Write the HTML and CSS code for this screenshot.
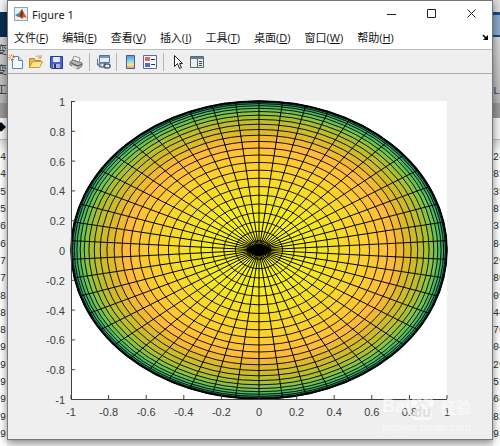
FILE: index.html
```html
<!DOCTYPE html>
<html lang="zh-CN">
<head>
    <meta charset="UTF-8">
    <meta name="viewport" content="width=device-width, initial-scale=1">
    <title>Figure 1</title>
    <link rel="stylesheet" href="styles.css">
</head>
<body>
    <div class="behind left">
        <div class="strip title"></div>
        <div class="strip ribbon"><span>变</span><span>变</span><span>工</span></div>
        <div class="strip path">◆</div>
        <div class="digits"><span>4</span><span>4</span><span>5</span><span>5</span><span>6</span><span>6</span><span>7</span><span>7</span><span>8</span><span>8</span><span>8</span><span>9</span><span>9</span><span>9</span><span>9</span><span>9</span><span>9</span></div>
    </div>

    <main class="window">
        <header class="titlebar">
            <svg class="logo" viewBox="0 0 14 14">
                <rect x=".5" y=".5" width="13" height="13" fill="#e9f0f5" stroke="#91a4b3"/>
                <path d="M1 8l4-2 3-4-1 7-3 1z" fill="#3e83b8"/>
                <path d="M4 10l2-3 2-5 2 4 3 5-3-1-2 2-2-2z" fill="#d4541f"/>
                <path d="M8 2l1 5-2 4-1-2z" fill="#802616"/>
            </svg>
            <h1>Figure 1</h1>
            <div class="controls">
                <button aria-label="最小化"><svg viewBox="0 0 10 10"><path d="M0 5.500h9"/></svg></button>
                <button aria-label="最大化"><svg viewBox="0 0 10 10"><path d="M.5 .5h8v8h-8z"/></svg></button>
                <button aria-label="关闭"><svg viewBox="0 0 10 10"><path d="M.5 .5l8 8M8.500 .5l-8 8"/></svg></button>
            </div>
        </header>

        <nav class="menubar">
            <button>文件(<u>F</u>)</button>
            <button>编辑(<u>E</u>)</button>
            <button>查看(<u>V</u>)</button>
            <button>插入(<u>I</u>)</button>
            <button>工具(<u>T</u>)</button>
            <button>桌面(<u>D</u>)</button>
            <button>窗口(<u>W</u>)</button>
            <button>帮助(<u>H</u>)</button>
            <svg class="dock" viewBox="0 0 6 6"><path d="M1 1l3 3" stroke="#000" stroke-width="1.500"/><path d="M6 1v5H1z"/></svg>
        </nav>

        <div class="toolbar">
            <button aria-label="新建图窗"><svg viewBox="0 0 16 16"><path d="M4.500 2.500h6l4 4v8h-10z" fill="#f5faff" stroke="#6583b5"/><path d="M10.500 2.500v4h4" fill="#cddcf2" stroke="#6583b5"/><path d="M1 1l5 5M6 1L1 6M3.500 0v7M0 3.500h7" stroke="#e5865b"/><circle cx="3.500" cy="3.500" r="1.300" fill="#fff1b5"/></svg></button>
            <button aria-label="打开文件"><svg viewBox="0 0 16 16"><path d="M1.500 13.500v-9h5l1 2h5v2" fill="#e7b947" stroke="#bf8b25"/><path d="M1.500 13.500l3-6h10l-3 6z" fill="#ffe493" stroke="#c99932"/><path d="M8 3c2-2 4-1 5 1M13 1v3h-3" fill="none" stroke="#bd9852"/></svg></button>
            <button aria-label="保存图窗"><svg viewBox="0 0 16 16"><path d="M2.500 2.500h12v12h-11l-1-1z" fill="#4a62cf" stroke="#293d91"/><path d="M5 3h7v5H5z" fill="#e4ecfb"/><path d="M5 10h7v4H5z" fill="#afb8d3"/><path d="M6 10h2v4H6z" fill="#233575"/></svg></button>
            <button aria-label="打印图窗"><svg viewBox="0 0 16 16"><path d="M4 7l2-5 6 2-1 5z" fill="#eef3fa" stroke="#8b95a4"/><path d="M2 8l3-2 9 3v3l-4 3-8-4z" fill="#b4b3ae" stroke="#77756f"/><path d="M3 9l7 3 4-2" fill="none" stroke="#4c4c48"/><path d="M4 12l5 2" stroke="#fff"/></svg></button>
            <i></i>
            <button aria-label="链接绘图"><svg viewBox="0 0 16 16"><path d="M4.500 1.500h10v7h-10z" fill="#e5edf8" stroke="#556e9f"/><path d="M5 2h9v2H5z" fill="#7893c6"/><path d="M2.500 5v6h4" fill="none" stroke="#556e9f"/><rect x="4" y="9" width="6" height="4" rx="2" fill="none" stroke="#657b9c" stroke-width="1.500"/><rect x="9" y="10" width="6" height="4" rx="2" fill="none" stroke="#485e82" stroke-width="1.500"/></svg></button>
            <i></i>
            <button aria-label="插入颜色栏"><svg viewBox="0 0 16 16"><defs><linearGradient id="bar" x2="0" y2="1"><stop stop-color="#6685e0"/><stop offset=".4" stop-color="#7bdbe3"/><stop offset=".7" stop-color="#f4e792"/><stop offset="1" stop-color="#ed9a75"/></linearGradient></defs><path d="M4.500 1.500h8v13h-8z" fill="url(#bar)" stroke="#455c91"/></svg></button>
            <button aria-label="插入图例"><svg viewBox="0 0 16 16"><path d="M1.500 1.500h13v13h-13z" fill="#f8faff" stroke="#576e9c"/><path d="M3 3h5v4H3z" fill="#ed6558"/><path d="M3 9h5v4H3z" fill="#5266dc"/><path d="M9 5.500h4M9 10.500h4" stroke="#333"/></svg></button>
            <i></i>
            <button aria-label="编辑绘图"><svg viewBox="0 0 16 16"><path d="M5.500 1.500v11l3-3 2 5 2-1-2-4h3z" fill="#fff" stroke="#222"/></svg></button>
            <button aria-label="属性检查器"><svg viewBox="0 0 16 16"><path d="M1.500 2.500h13v11h-13z" fill="#e8eef0" stroke="#59676f"/><path d="M2 3h12v2H2z" fill="#617f98"/><path d="M8.500 5v8" stroke="#59676f"/><path d="M10 7.500h3M10 9.500h3M10 11.500h3" stroke="#444"/></svg></button>
        </div>

        <section class="figure">
            <svg id="plot" viewBox="0 0 484 365" role="img" aria-label="球面俯视图"></svg>
            <div class="watermark">
                <div class="brand">Bai<span class="paw"><svg viewBox="0 0 24 28"><ellipse cx="4" cy="11" rx="3" ry="4"/><ellipse cx="9" cy="5" rx="3" ry="5"/><ellipse cx="16" cy="5" rx="3" ry="5"/><ellipse cx="21" cy="11" rx="3" ry="4"/><path d="M12 12c4 0 5 4 9 8 3 4 1 8-3 8H6c-4 0-6-4-3-8 4-4 5-8 9-8z"/></svg><b>du</b></span><em>经验</em></div>
                <div class="site">jingyan.baidu.com</div>
            </div>
        </section>
    </main>

    <div class="behind right">
        <div class="strip title"></div>
        <div class="strip ribbon"><span>LA</span></div>
        <div class="strip path"></div>
        <div class="digits"><span>24</span><span>81</span><span>35</span><span>87</span><span>37</span><span>84</span><span>29</span><span>80</span><span>09</span><span>44</span><span>70</span><span>04</span><span>29</span><span>51</span><span>68</span><span>82</span><span>93</span></div>
    </div>

    <script src="plot.js"></script>
</body>
</html>
```

FILE: styles.css
```css
* {
    box-sizing: border-box;
}
body {
    margin: 0;
    min-height: 100vh;
    display: flex;
    background: #f0f0f0;
    font-family: "Noto Sans", "Noto Sans CJK SC", sans-serif;
    overflow: hidden;
}
button {
    padding: 0;
    border: none;
    background: none;
    font: inherit;
    color: inherit;
}
svg {
    display: block;
}
.window {
    flex: 1;
    min-width: 0;
    align-self: flex-start;
    border: 1px solid #777;
    background: #fff;
    box-shadow: 0 2px 8px rgba(0,0,0,0.5);
    z-index: 1;
}

/* 标题栏 */
.titlebar {
    display: flex;
    align-items: center;
    height: 26px;
    padding-left: 6px;
    gap: 4px;
}
.logo {
    width: 14px;
    height: 14px;
}
h1 {
    margin: 0;
    font-size: 11px;
    font-weight: normal;
    color: #222;
}
.controls {
    display: flex;
    margin-left: auto;
}
.controls button {
    width: 40px;
    height: 26px;
    display: flex;
    align-items: center;
    justify-content: center;
}
.controls svg {
    width: 10px;
    height: 10px;
    fill: none;
    stroke: #222;
}

/* 菜单 */
.menubar {
    display: flex;
    align-items: center;
    height: 23px;
    padding: 0 4px 2px 6px;
    gap: 14px;
    border-bottom: 1px solid #bbb;
    font-family: "Open Sans", "Noto Sans CJK SC", sans-serif;
    font-size: 11px;
    white-space: nowrap;
    color: #111;
}
.dock {
    width: 6px;
    height: 6px;
    margin-left: auto;
}
.toolbar {
    display: flex;
    align-items: center;
    height: 24px;
    gap: 4px;
    background: #efefef;
    border-bottom: 1px solid #aaa;
}
.toolbar svg {
    width: 16px;
    height: 16px;
}
.toolbar i {
    width: 1px;
    height: 18px;
    margin: 0 1px;
    background: #b5b5b5;
}

/* 图窗 */
.figure {
    position: relative;
    background: #efefef;
}
#plot {
    width: 100%;
    font-family: "Liberation Sans", Arial, sans-serif;
    font-size: 11px;
    fill: #404040;
}
.watermark {
    position: absolute;
    right: 21px;
    bottom: 5px;
    color: rgba(255,255,255,0.6);
    font-family: "Liberation Sans", "Noto Sans CJK SC", sans-serif;
}
.brand {
    display: flex;
    align-items: center;
    height: 28px;
    font-size: 18px;
    font-weight: bold;
}
.brand em {
    margin-left: auto;
    font-style: normal;
    font-size: 15px;
}
.paw {
    display: grid;
    place-items: center;
}
.paw svg, .paw b {
    grid-area: 1 / 1;
}
.paw svg {
    width: 24px;
    height: 28px;
    fill: rgba(255,255,255,0.6);
}
.paw b {
    align-self: end;
    font-size: 14px;
    color: #dedede;
}
.site {
    font-size: 11px;
    line-height: 14px;
}

/* 后面的窗口 */
.behind {
    display: flex;
    flex-direction: column;
    width: 7px;
    height: 100vh;
    flex: none;
    overflow: hidden;
    background: #f8f8f8;
    font-family: "Liberation Mono", "Noto Sans CJK SC", monospace;
    font-size: 10px;
    color: #333;
}
.strip {
    flex: none;
}
.strip.title {
    height: 37px;
    background: linear-gradient(#f4f4f4 12px, #0a2e50 12px);
}
.ribbon {
    height: 81px;
    padding-top: 4px;
    background: linear-gradient(#d5d5d5, #b5b5b5 66px, #999 66px);
}
.ribbon span {
    display: block;
    width: 12px;
    height: 20px;
    line-height: 20px;
    margin-left: -4px;
    font-size: 11px;
}
.path {
    height: 22px;
    background: #f5f5f5;
    border-bottom: 1px solid #bbb;
    line-height: 22px;
    color: #000;
}
.left .path {
    text-indent: -4px;
}
.digits {
    flex: 1;
    display: flex;
    flex-direction: column;
    justify-content: space-between;
    padding: 10px 0 3px;
    background: linear-gradient(#ddd, #fff 12px);
}
.digits span {
    line-height: 16px;
}
.right .title {
    background: linear-gradient(#ddd 12px, #174c85 12px, #174c85 15px, #8ca8c8 15px, #8ca8c8 35px, #174c85 35px);
}
.right .ribbon {
    padding-top: 44px;
    color: #174c85;
}
.right .ribbon span {
    margin-left: 0;
}
```

FILE: plot.js
```js
const plot = document.getElementById('plot');
const cx = 251, cy = 176, rx = 188, ry = 149;
const N = 50;

// parula 色图的上半段
const colors = [
    [0, 30, 125, 105], [0.15, 45, 165, 115], [0.3, 105, 196, 85],
    [0.45, 181, 190, 45], [0.58, 219, 185, 43], [0.68, 254, 185, 61],
    [0.8, 253, 206, 47], [0.92, 245, 227, 38], [1, 247, 245, 27]
];

function colorAt(z) {
    let i = 1;
    while (i < colors.length - 1 && z > colors[i][0]) i++;
    const a = colors[i - 1], b = colors[i];
    const t = (z - a[0]) / (b[0] - a[0]);
    return 'rgb(' + [1, 2, 3].map(k => Math.round(a[k] + (b[k] - a[k]) * t)).join(',') + ')';
}

function add(name, attrs, text) {
    const el = document.createElementNS('http://www.w3.org/2000/svg', name);
    for (const key in attrs) el.setAttribute(key, attrs[key]);
    if (text !== undefined) el.textContent = text;
    plot.appendChild(el);
}

add('rect', { x: cx - rx, y: cy - ry, width: rx * 2, height: ry * 2, fill: '#fff' });

for (let k = N / 2; k > 0; k--) {
    const r = Math.sin(k * Math.PI / N);
    add('ellipse', {
        cx, cy, rx: rx * r, ry: ry * r,
        fill: colorAt(Math.cos(k * Math.PI / N)), stroke: '#000', 'stroke-width': k > 23 ? 1.5 : 0.9
    });
}

for (let k = 0; k < N; k++) {
    const a = Math.PI / 2 + k * 2 * Math.PI / N;
    add('line', {
        x1: cx, y1: cy, x2: cx + rx * Math.cos(a), y2: cy + ry * Math.sin(a),
        stroke: '#000', 'stroke-width': 1
    });
}

// 极点处网格线重叠
add('ellipse', { cx, cy, rx: 10, ry: 6, fill: '#000' });

const left = cx - rx, bottom = cy + ry;
add('path', { d: `M${left + 0.5} ${cy - ry}V${bottom + 0.5}H${cx + rx}`, fill: 'none', stroke: '#404040' });

for (let i = 0; i <= 10; i++) {
    const v = (i - 5) / 5;
    const x = cx + rx * v, y = cy - ry * v;
    add('path', { d: `M${left} ${y + 0.5}h4M${x} ${bottom}v-4`, stroke: '#404040' });
    add('text', { x: left - 6, y: y + 5, 'text-anchor': 'end' }, v);
    add('text', { x, y: bottom + 17, 'text-anchor': 'middle' }, v);
}
```
